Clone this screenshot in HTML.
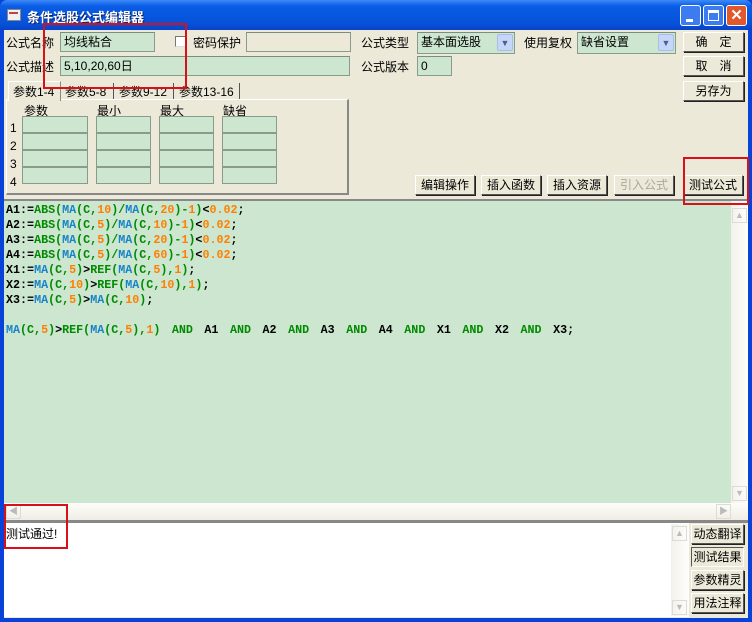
<!DOCTYPE html>
<html><head><meta charset="utf-8"><style>
*{margin:0;padding:0;box-sizing:border-box}
body{width:752px;height:622px;overflow:hidden;background:#0842d8;font-family:"Liberation Sans","Noto Sans CJK SC",sans-serif;font-size:12px;color:#000;position:relative}
.a{position:absolute}
#win{left:4px;top:30px;width:744px;height:588px;background:#ece9d8}
.title{left:0;top:0;width:752px;height:30px;background:linear-gradient(#3d8af7,#0a5de6 20%,#0651d8 80%,#0842c8);border-radius:7px 7px 0 0}
.field{background:#cce6cf;border:1px solid #8a9a8c;border-top-color:#7f8a80;height:20px;padding:2px 3px;font-size:12px;line-height:14px}
.btn{background:linear-gradient(#fefefe,#ece9d8 85%,#d6d0c0);border:1px solid #003c74;border-radius:2px;text-align:center;font-size:12px;line-height:20px;height:22px}
.btn2{background:#ece9d8;border:1px solid #fff;border-right-color:#555;border-bottom-color:#555;box-shadow:1px 1px 0 #222;text-align:center;line-height:18px;height:20px}
.code{font-family:"Liberation Mono",monospace;font-weight:bold;font-size:11.7px;line-height:15px;white-space:pre;color:#000}
.g{color:#008a00}.b{color:#1884c8}.o{color:#ff8000}
.cell{width:66px;height:17px;background:#cce6cf;border:1px solid #8a9a8c}
</style></head><body>
<div class="a title"></div>
<div class="a" style="left:7px;top:9px;width:14px;height:12px;background:#f0f0f0;border:1px solid #888"></div>
<div class="a" style="left:9px;top:12px;width:9px;height:2px;background:#b44"></div>
<div class="a" style="left:27px;top:7px;color:#fff;font-weight:bold;font-size:13px;text-shadow:1px 1px #0a246a">条件选股公式编辑器</div>
<div class="a" style="left:680px;top:5px;width:21px;height:21px;background:#3c7cf0;border:1px solid #fff;border-radius:3px"><div class="a" style="left:5px;top:13px;width:7px;height:3px;background:#fff"></div></div>
<div class="a" style="left:703px;top:5px;width:21px;height:21px;background:#3c7cf0;border:1px solid #fff;border-radius:3px"><div class="a" style="left:4px;top:4px;width:11px;height:11px;border:1px solid #fff;border-top-width:3px"></div></div>
<div class="a" style="left:726px;top:5px;width:21px;height:21px;background:#e0582c;border:1px solid #fff;border-radius:3px;color:#fff;font-weight:bold;font-size:15px;line-height:19px;text-align:center">✕</div>
<div class="a" id="win"></div>

<div class="a" style="left:6px;top:34px">公式名称</div>
<div class="a field" style="left:60px;top:32px;width:95px">均线粘合</div>
<div class="a" style="left:175px;top:36px;width:11px;height:11px;background:#fff;border:1px solid #777;border-right-color:#ddd;border-bottom-color:#ddd"></div>
<div class="a" style="left:193px;top:34px">密码保护</div>
<div class="a field" style="left:246px;top:32px;width:105px;background:#ece9d8"></div>
<div class="a" style="left:361px;top:34px">公式类型</div>
<div class="a field" style="left:417px;top:32px;width:98px;height:22px">基本面选股</div>
<div class="a" style="left:497px;top:34px;width:16px;height:17px;background:#c6d6fa;border:1px solid #a8bde8;border-radius:2px;color:#4d6185;font-size:9px;text-align:center;line-height:16px">▼</div>
<div class="a" style="left:524px;top:34px">使用复权</div>
<div class="a field" style="left:577px;top:32px;width:99px;height:22px">缺省设置</div>
<div class="a" style="left:658px;top:34px;width:16px;height:17px;background:#c6d6fa;border:1px solid #a8bde8;border-radius:2px;color:#4d6185;font-size:9px;text-align:center;line-height:16px">▼</div>
<div class="a btn2" style="left:683px;top:32px;width:61px">确　定</div>
<div class="a btn2" style="left:683px;top:56px;width:61px">取　消</div>
<div class="a btn2" style="left:683px;top:81px;width:61px">另存为</div>

<div class="a" style="left:6px;top:58px">公式描述</div>
<div class="a field" style="left:60px;top:56px;width:290px">5,10,20,60日</div>
<div class="a" style="left:361px;top:58px">公式版本</div>
<div class="a field" style="left:417px;top:56px;width:35px">0</div>

<div class="a" style="left:6px;top:99px;width:343px;height:96px;border:1px solid #fff;border-right:2px solid #888;border-bottom:2px solid #888"></div>
<div class="a" style="left:8px;top:81px;width:53px;height:20px;background:#ece9d8;border:1px solid #fff;border-bottom:none;border-right:1px solid #888;padding:1px 4px">参数1-4</div>
<div class="a" style="left:62px;top:83px;width:52px;height:16px;border-right:1px solid #555;padding:0 3px">参数5-8</div>
<div class="a" style="left:116px;top:83px;width:58px;height:16px;border-right:1px solid #555;padding:0 3px">参数9-12</div>
<div class="a" style="left:176px;top:83px;width:64px;height:16px;border-right:1px solid #555;padding:0 3px">参数13-16</div>
<div class="a" style="left:24px;top:102px">参数</div>
<div class="a" style="left:97px;top:102px">最小</div>
<div class="a" style="left:160px;top:102px">最大</div>
<div class="a" style="left:223px;top:102px">缺省</div>
<div class="a" style="left:10px;top:119px;line-height:18px">1<br>2<br>3<br>4</div>
<div class="a" style="left:22px;top:116px"><div class="cell"></div><div class="cell"></div><div class="cell"></div><div class="cell"></div></div>
<div class="a" style="left:96px;top:116px"><div class="cell" style="width:55px"></div><div class="cell" style="width:55px"></div><div class="cell" style="width:55px"></div><div class="cell" style="width:55px"></div></div>
<div class="a" style="left:159px;top:116px"><div class="cell" style="width:55px"></div><div class="cell" style="width:55px"></div><div class="cell" style="width:55px"></div><div class="cell" style="width:55px"></div></div>
<div class="a" style="left:222px;top:116px"><div class="cell" style="width:55px"></div><div class="cell" style="width:55px"></div><div class="cell" style="width:55px"></div><div class="cell" style="width:55px"></div></div>

<div class="a btn2" style="left:415px;top:175px;width:60px">编辑操作</div>
<div class="a btn2" style="left:481px;top:175px;width:60px">插入函数</div>
<div class="a btn2" style="left:547px;top:175px;width:60px">插入资源</div>
<div class="a btn2" style="left:614px;top:175px;width:60px;color:#a8a8a0">引入公式</div>
<div class="a btn2" style="left:683px;top:175px;width:60px">测试公式</div>

<div class="a" style="left:4px;top:199px;width:744px;height:2px;background:#888"></div>
<div class="a" style="left:4px;top:201px;width:727px;height:302px;background:#cce6d0"></div>
<div class="a" style="left:731px;top:201px;width:17px;height:302px;background:linear-gradient(90deg,#f3f1ea,#fdfdfb)"></div>
<div class="a" style="left:732px;top:208px;width:15px;height:15px;border:1px solid #dcdcd4;color:#bbb;font-size:9px;text-align:center;line-height:13px">▲</div>
<div class="a" style="left:732px;top:486px;width:15px;height:15px;border:1px solid #dcdcd4;color:#bbb;font-size:9px;text-align:center;line-height:13px">▼</div>
<div class="a" style="left:4px;top:503px;width:744px;height:17px;background:linear-gradient(#fdfdfb,#efede4)"></div>
<div class="a" style="left:6px;top:504px;width:15px;height:15px;border:1px solid #dcdcd4;color:#bbb;font-size:9px;text-align:center;line-height:13px">◀</div>
<div class="a" style="left:716px;top:504px;width:15px;height:15px;border:1px solid #dcdcd4;color:#bbb;font-size:9px;text-align:center;line-height:13px">▶</div>
<div class="a" style="left:4px;top:520px;width:744px;height:3px;background:#888"></div>

<div class="a code" style="left:6px;top:203px">A1:=<span class="g">ABS(</span><span class="b">MA</span><span class="g">(C,</span><span class="o">10</span><span class="g">)/</span><span class="b">MA</span><span class="g">(C,</span><span class="o">20</span><span class="g">)-</span><span class="o">1</span><span class="g">)</span>&lt;<span class="o">0.02</span>;
A2:=<span class="g">ABS(</span><span class="b">MA</span><span class="g">(C,</span><span class="o">5</span><span class="g">)/</span><span class="b">MA</span><span class="g">(C,</span><span class="o">10</span><span class="g">)-</span><span class="o">1</span><span class="g">)</span>&lt;<span class="o">0.02</span>;
A3:=<span class="g">ABS(</span><span class="b">MA</span><span class="g">(C,</span><span class="o">5</span><span class="g">)/</span><span class="b">MA</span><span class="g">(C,</span><span class="o">20</span><span class="g">)-</span><span class="o">1</span><span class="g">)</span>&lt;<span class="o">0.02</span>;
A4:=<span class="g">ABS(</span><span class="b">MA</span><span class="g">(C,</span><span class="o">5</span><span class="g">)/</span><span class="b">MA</span><span class="g">(C,</span><span class="o">60</span><span class="g">)-</span><span class="o">1</span><span class="g">)</span>&lt;<span class="o">0.02</span>;
X1:=<span class="b">MA</span><span class="g">(C,</span><span class="o">5</span><span class="g">)</span>&gt;<span class="g">REF(</span><span class="b">MA</span><span class="g">(C,</span><span class="o">5</span><span class="g">),</span><span class="o">1</span><span class="g">)</span>;
X2:=<span class="b">MA</span><span class="g">(C,</span><span class="o">10</span><span class="g">)</span>&gt;<span class="g">REF(</span><span class="b">MA</span><span class="g">(C,</span><span class="o">10</span><span class="g">),</span><span class="o">1</span><span class="g">)</span>;
X3:=<span class="b">MA</span><span class="g">(C,</span><span class="o">5</span><span class="g">)</span>&gt;<span class="b">MA</span><span class="g">(C,</span><span class="o">10</span><span class="g">)</span>;

<span style="word-spacing:4.5px"><span class="b">MA</span><span class="g">(C,</span><span class="o">5</span><span class="g">)</span>&gt;<span class="g">REF(</span><span class="b">MA</span><span class="g">(C,</span><span class="o">5</span><span class="g">),</span><span class="o">1</span><span class="g">)</span> <span class="g">AND</span> A1 <span class="g">AND</span> A2 <span class="g">AND</span> A3 <span class="g">AND</span> A4 <span class="g">AND</span> X1 <span class="g">AND</span> X2 <span class="g">AND</span> X3;</span></div>

<div class="a" style="left:4px;top:523px;width:685px;height:94px;background:#fff"></div>
<div class="a" style="left:671px;top:524px;width:17px;height:92px;background:linear-gradient(90deg,#f3f1ea,#fdfdfb)"></div>
<div class="a" style="left:672px;top:526px;width:15px;height:15px;border:1px solid #dcdcd4;color:#bbb;font-size:9px;text-align:center;line-height:13px">▲</div>
<div class="a" style="left:672px;top:600px;width:15px;height:15px;border:1px solid #dcdcd4;color:#bbb;font-size:9px;text-align:center;line-height:13px">▼</div>
<div class="a" style="left:6px;top:525px">测试通过!</div>
<div class="a btn2" style="left:691px;top:524px;width:53px">动态翻译</div>
<div class="a btn2" style="left:691px;top:547px;width:53px;border-color:#555 #fff #fff #555;box-shadow:none">测试结果</div>
<div class="a btn2" style="left:691px;top:570px;width:53px">参数精灵</div>
<div class="a btn2" style="left:691px;top:593px;width:53px">用法注释</div>

<div class="a" style="left:43px;top:23px;width:144px;height:66px;border:2px solid #d81018"></div>
<div class="a" style="left:683px;top:157px;width:66px;height:48px;border:2px solid #d81018"></div>
<div class="a" style="left:4px;top:504px;width:64px;height:45px;border:2px solid #d81018"></div>
</body></html>
